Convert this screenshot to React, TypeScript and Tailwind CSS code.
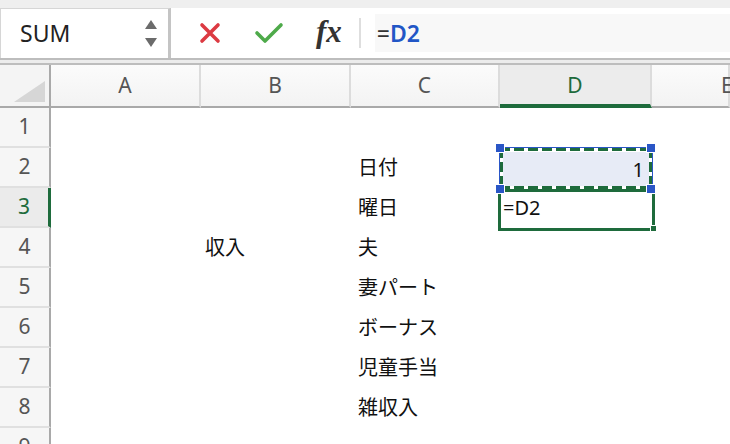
import React from 'react';

const COLS = [
  { key: 'A', w: 'w-[150px]' },
  { key: 'B', w: 'w-[150px]' },
  { key: 'C', w: 'w-[149px]' },
  { key: 'D', w: 'w-[152px]' },
  { key: 'E', w: 'flex-1' },
];

const ROWS: { n: number; b?: string; c?: string }[] = [
  { n: 1 },
  { n: 2, c: '日付' },
  { n: 3, c: '曜日' },
  { n: 4, b: '収入', c: '夫' },
  { n: 5, c: '妻パート' },
  { n: 6, c: 'ボーナス' },
  { n: 7, c: '児童手当' },
  { n: 8, c: '雑収入' },
  { n: 9 },
];

const font = "font-['Noto_Sans','Noto_Sans_CJK_JP',sans-serif]";

function Handle({ className }: { className: string }) {
  return <div className={`absolute w-[10px] h-[10px] bg-[#2a56c6] border border-white z-20 ${className}`} />;
}

function FormulaBar() {
  return (
    <div className="h-[58px] bg-[#efefef] pt-[8px] flex">
      {/* name box */}
      <div className="w-[171px] shrink-0 h-[50px] bg-white border-t border-l border-[#d6d6d6] border-r-[3px] border-r-[#c4c4c4] flex items-center pl-[19px] pr-[10px]">
        <span className="flex-1 text-[23px] text-[#222]">SUM</span>
        <svg width="14" height="30" viewBox="0 0 14 30">
          <path d="M7 1 L13 10 L1 10 Z" fill="#6b6b6b" />
          <path d="M1 19 L13 19 L7 28 Z" fill="#6b6b6b" />
        </svg>
      </div>
      {/* formula area */}
      <div className="flex-1 h-[50px] bg-white flex items-center">
        <svg width="24" height="24" viewBox="0 0 24 24" className="ml-[27px] shrink-0">
          <path d="M4 4 L20 20 M20 4 L4 20" stroke="#dc3a42" strokeWidth="3.6" strokeLinecap="round" />
        </svg>
        <svg width="30" height="24" viewBox="0 0 30 24" className="ml-[32px] shrink-0">
          <path d="M3 12 L11 20 L27 4" stroke="#4eaa4a" strokeWidth="3.6" fill="none" strokeLinecap="round" strokeLinejoin="round" />
        </svg>
        <span className="ml-[32px] text-[31px] italic font-semibold text-[#333] font-['Liberation_Serif',serif] leading-none -mt-[4px]">fx</span>
        <div className="ml-[17px] w-[2px] h-[30px] bg-[#dedede] shrink-0" />
        <div className="ml-[14px] flex-1 h-[38px] bg-[#f8f8f8] flex items-center pl-[2px] text-[23px]">
          <span className="text-[#333]">=</span>
          <span className="text-[#2156c6] font-semibold">D2</span>
        </div>
      </div>
    </div>
  );
}

function ColumnHeader() {
  return (
    <div className="flex h-[43px]">
      <div className="w-[51px] shrink-0 bg-[#f4f4f4] border-r-2 border-[#a9a9a9] border-b-2 border-b-[#a9a9a9] relative">
        <svg width="32" height="22" viewBox="0 0 32 22" className="absolute left-[14px] top-[16px]">
          <path d="M31 0 L31 21 L0 21 Z" fill="#d6d6d6" />
        </svg>
      </div>
      {COLS.map((c) =>
        c.key === 'D' ? (
          <div key={c.key} className={`${c.w} shrink-0 bg-[#ececec] border-r-2 border-[#dcdcdc] border-b-[4px] border-b-[#1e6b3c] flex items-center justify-center text-[21px] text-[#1e6b3c] pt-[2px]`}>
            {c.key}
          </div>
        ) : (
          <div key={c.key} className={`${c.w} ${c.key === 'E' ? 'min-w-0 justify-start pl-[69px]' : 'shrink-0 justify-center'} bg-gradient-to-b from-[#fbfbfb] to-[#f3f3f3] border-r-2 border-[#dcdcdc] border-b-2 border-b-[#a9a9a9] flex items-center text-[21px] text-[#555]`}>
            {c.key}
          </div>
        )
      )}
    </div>
  );
}

function DashLine({ className, vertical }: { className: string; vertical?: boolean }) {
  return (
    <div
      className={`absolute z-10 ${className} ${
        vertical
          ? 'bg-[repeating-linear-gradient(180deg,#1e6b3c_0_10px,#ffffff_10px_14px)]'
          : 'bg-[repeating-linear-gradient(90deg,#1e6b3c_0_10px,#ffffff_10px_14px)]'
      }`}
    />
  );
}

function Row({ r }: { r: (typeof ROWS)[number] }) {
  const active = r.n === 3;
  return (
    <div className="flex h-[40px]">
      <div
        className={`w-[51px] shrink-0 border-b-2 border-[#e0e0e0] flex items-center justify-center text-[21px] ${
          active ? 'bg-[#ebebeb] text-[#1e6b3c] border-r-[3px] border-r-[#1e6b3c]' : 'bg-[#f6f6f6] text-[#555] border-r-2 border-r-[#a9a9a9]'
        }`}
      >
        {r.n}
      </div>
      <div className="w-[150px] shrink-0" />
      <div className="w-[150px] shrink-0 flex items-center pl-[4px] text-[20px] text-[#111]">{r.b}</div>
      <div className="w-[149px] shrink-0 flex items-center pl-[7px] text-[20px] text-[#111]">{r.c}</div>
      <div className="w-[152px] shrink-0 relative">
        {r.n === 2 && (
          <>
            <div className="absolute left-[-1px] top-[-1px] w-[154px] h-[42px] border border-[#2a56c6]" />
            <div className="absolute left-[3px] top-[4px] w-[146px] h-[35px] bg-[#e7ebf6] flex items-center justify-end pr-[5px] text-[20px] text-[#111]">
              1
            </div>
            <DashLine className="left-0 top-0 w-[152px] h-[3px]" />
            <DashLine className="left-0 top-[38px] w-[152px] h-[3px]" />
            <DashLine vertical className="left-0 top-0 w-[3px] h-[41px]" />
            <DashLine vertical className="left-[149px] top-0 w-[3px] h-[41px]" />
            <Handle className="left-[-5px] top-[-5px]" />
            <Handle className="left-[146px] top-[-5px]" />
            <Handle className="left-[-5px] top-[36px]" />
            <Handle className="left-[146px] top-[36px]" />
          </>
        )}
        {r.n === 3 && (
          <>
            <div className="absolute left-[-2px] top-[1px] w-[157px] h-[42px] border-[3px] border-[#1e6b3c]" />
            <div className="absolute left-[150px] top-[37px] w-[7px] h-[7px] bg-[#1e6b3c] border border-white" />
            <div className="absolute left-[3px] top-0 h-[40px] flex items-center text-[20px] text-[#111]">=D2</div>
          </>
        )}
      </div>
      <div className="flex-1" />
    </div>
  );
}

export default function App() {
  return (
    <div className={`w-[730px] h-[444px] overflow-hidden bg-white ${font}`}>
      <FormulaBar />
      <div className="h-[7px] bg-[#ececec] border-t-2 border-b-2 border-[#bdbdbd]" />
      <ColumnHeader />
      {ROWS.map((r) => (
        <Row key={r.n} r={r} />
      ))}
    </div>
  );
}
